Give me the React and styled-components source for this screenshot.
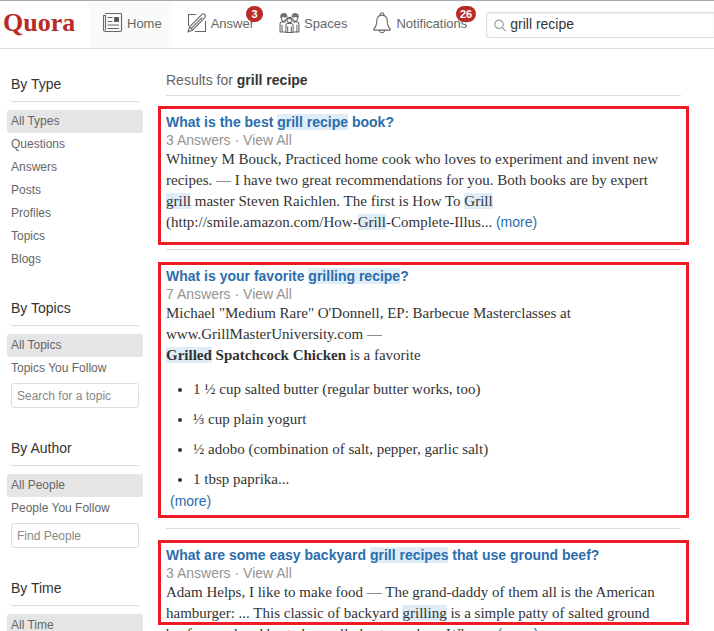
import React from "react";
import styled, { createGlobalStyle, css } from "styled-components";

const sans = '"Liberation Sans", Arial, sans-serif';
const serif = '"Liberation Serif", "Times New Roman", serif';

const GlobalStyle = createGlobalStyle`
  *, *::before, *::after { box-sizing: border-box; }
  body { margin: 0; background: #fff; color: #333; font-family: ${sans}; }
  a { color: inherit; text-decoration: none; }
`;

const Page = styled.div`
  height: 100vh;
  overflow: hidden;
  display: flex;
  flex-direction: column;
`;

const Header = styled.header`
  display: flex;
  flex: none;
  height: 49px;
  border-top: 1px solid #aaa;
  border-bottom: 1px solid #dcdcdc;
`;

const Logo = styled.a`
  flex: none;
  width: 89px;
  padding-left: 3px;
  color: #b92b27;
  font: bold 26px/43px ${serif};
`;

const Nav = styled.nav`
  display: flex;
  gap: 1px;
`;

const NavLink = styled.a`
  position: relative;
  display: flex;
  align-items: center;
  gap: 4px;
  padding: 0 10px 3px 14px;
  color: #666;
  font-size: 13px;
  white-space: nowrap;
  background: ${(p) => (p.$active ? "#f9fafa" : "transparent")};

  svg { flex: none; }
`;

const Badge = styled.span`
  position: absolute;
  top: 5px;
  right: 1px;
  min-width: 17px;
  height: 16px;
  padding: 0 4px;
  border-radius: 8px;
  background: #b92b27;
  color: #fff;
  font: bold 11px/16px ${sans};
  text-align: center;
`;

const SearchBox = styled.label`
  display: flex;
  flex: 1;
  align-items: center;
  gap: 4px;
  min-width: 0;
  height: 26px;
  margin: 11px 0 0 9px;
  padding-left: 7px;
  border: 1px solid #ddd;
  border-right: 0;
  border-radius: 4px 0 0 4px;
  box-shadow: inset 0 1px 2px #eee;
`;

const SearchInput = styled.input`
  flex: 1;
  min-width: 0;
  padding: 0 0 2px;
  border: 0;
  outline: 0;
  background: transparent;
  color: #333;
  font: 14px/20px ${sans};
`;

const Body = styled.div`
  display: flex;
  gap: 23px;
  padding: 0 33px 0 7px;
`;

const Sidebar = styled.aside`
  flex: none;
  width: 136px;
  padding-top: 25px;
`;

const FilterSection = styled.section`
  display: flow-root;
  margin-bottom: 27px;
`;

const FilterHeading = styled.h2`
  margin: 0 4px 8px;
  padding-bottom: 7px;
  border-bottom: 1px solid #ddd;
  font: 14px/20px ${sans};
`;

const FilterLink = styled.a`
  display: block;
  padding: 0 4px;
  border-radius: 2px;
  color: #666;
  font-size: 12px;
  line-height: 23px;
  ${(p) => p.$active && css`background: #e5e5e5;`}
`;

const FilterInput = styled.input`
  display: block;
  width: 128px;
  height: 25px;
  margin: 3px 4px;
  padding: 0 5px;
  border: 1px solid #ddd;
  border-radius: 3px;
  font: 12px/20px ${sans};

  &::placeholder { color: #888; opacity: 1; }
`;

const Results = styled.main`
  flex: 1;
  min-width: 0;
  padding-top: 21px;
`;

const ResultsHeading = styled.h1`
  margin: 0;
  padding-bottom: 5px;
  border-bottom: 1px solid #ddd;
  color: #666;
  font: 14px/20px ${sans};

  strong { color: #333; }
`;

const Result = styled.article`
  position: relative;
  padding: 17px 0 16px;
  border-bottom: 1px solid #ddd;
`;

/* Red outline laid over a result to call attention to it. */
const Callout = styled.div`
  position: absolute;
  top: ${(p) => p.$top}px;
  bottom: ${(p) => p.$bottom}px;
  left: -8px;
  right: -8px;
  border: 3px solid #ed1c24;
  pointer-events: none;
`;

const Title = styled.h3`
  margin: 0;
  color: #2b6dad;
  font: bold 14px/18px ${sans};
`;

const Meta = styled.div`
  color: #949494;
  font-size: 14px;
  line-height: 18px;
`;

const Excerpt = styled.div`
  font: 15px/21px ${serif};
`;

const Line = styled.span`
  display: block;
  white-space: nowrap;
`;

const Ingredients = styled.ul`
  display: grid;
  gap: 9px;
  margin: 13px 0 1px;
  padding-left: 27px;
`;

const Mark = styled.mark`
  background: #deedf8;
  color: inherit;
`;

const MoreLink = styled.a`
  color: #2b6dad;
  font: 14px/16px ${sans};
  ${(p) => p.$indent && css`margin-left: 4px;`}
`;

const stroke = { fill: "none", stroke: "#666", strokeWidth: 1.1, strokeLinejoin: "round", strokeLinecap: "round" };

const HomeIcon = () => (
  <svg width="20" height="20" viewBox="0 0 20 20" {...stroke} aria-hidden="true">
    <path d="M2.5.5h15.2q.8 0 .8.8v16q0 1.2-1.3 1.2H2.5q-2 0-2-1.8V2.5h2V17" />
    <path d="M5 4.5h4M5 8.5h4M5 12h10.5M5 15.5h10.5" />
    <path d="M11.5 4.5h4v4h-4z" fill="#555" />
  </svg>
);

const AnswerIcon = () => (
  <svg width="20" height="20" viewBox="0 0 20 20" {...stroke} aria-hidden="true">
    <path d="M9 1.5H1.5V13M18.5 8v10.5H8" strokeLinecap="butt" />
    <path d="M.9 19.1l1.7-5.2L14.9 1.4q1.4-1.2 2.8 0t.2 3L5.7 17.1zM2.6 13.9l3.1 3.2M4.4 15.3 14.8 4.8" />
  </svg>
);

const SpacesIcon = () => (
  <svg width="21" height="22" viewBox="0 0 22 22" {...stroke} aria-hidden="true">
    <path d="M7.2 21v-7.3q0-2.1 2-2.1h3.6q2 0 2 2.1V21zM9.1 15v6M12.9 15v6" />
    <circle cx="11" cy="7.8" r="2.7" />
    <path d="M8.4 7q1.9.2 3-1.2 1 1.1 2.2 1.2M6.7 10H3.2q-2.1 0-2.1 2v8.4h6M15.3 10h3.5q2.1 0 2.1 2v8.4h-6M3.2 13v7.4M18.8 13v7.4M2.3 4.6q0 4.2 2.8 4.5 2-.1 2.5-2.3M19.7 4.6q0 4.2-2.8 4.5-2-.1-2.5-2.3" />
    <path d="M2 4.8Q1.5 1.4 4.6 1.3q3.3-.7 3.7 3Q5.6 5.5 4.9 3.7 3.7 5.1 2 4.8zM20 4.8q.5-3.4-2.6-3.5-3.3-.7-3.7 3 2.7 1.2 3.4-.6 1.2 1.4 2.9 1.1z" fill="#777" />
  </svg>
);

const BellIcon = () => (
  <svg width="20" height="22" viewBox="-1 0 20 22" {...stroke} aria-hidden="true">
    <path d="M7.2 3.4V2.1Q7.4.8 9 .8t1.8 1.3v1.3M9 3.1c-3.7 0-5.2 2.8-5.2 5.7 0 4.5-.6 5.9-3 8.3q-.3 1 .6 1h15.2q.9 0 .6-1c-2.4-2.4-3-3.8-3-8.3 0-2.9-1.5-5.7-5.2-5.7zM6.5 18.5q.4 2.3 2.5 2.3t2.5-2.3" />
  </svg>
);

const SearchIcon = () => (
  <svg width="12" height="13" viewBox="0 0 12 13" fill="none" stroke="#999" strokeWidth="1.2" aria-hidden="true">
    <circle cx="5" cy="5.3" r="4.2" />
    <path d="m8 8.4 3.6 3.8" />
  </svg>
);

const filters = [
  { title: "By Type", items: ["All Types", "Questions", "Answers", "Posts", "Profiles", "Topics", "Blogs"] },
  { title: "By Topics", items: ["All Topics", "Topics You Follow"], placeholder: "Search for a topic" },
  { title: "By Author", items: ["All People", "People You Follow"], placeholder: "Find People" },
  { title: "By Time", items: ["All Time"] },
];

const AnswerMeta = ({ count }) => (
  <Meta>
    {count} Answers · <a href="#all">View All</a>
  </Meta>
);

export default function App() {
  return (
    <Page>
      <GlobalStyle />
      <Header>
        <Logo href="#top">Quora</Logo>
        <Nav>
          <NavLink href="#home" $active><HomeIcon />Home</NavLink>
          <NavLink href="#answer"><AnswerIcon />Answer<Badge>3</Badge></NavLink>
          <NavLink href="#spaces"><SpacesIcon />Spaces</NavLink>
          <NavLink href="#notifications"><BellIcon />Notifications<Badge>26</Badge></NavLink>
        </Nav>
        <SearchBox>
          <SearchIcon />
          <SearchInput type="text" aria-label="Search" defaultValue="grill recipe" />
        </SearchBox>
      </Header>
      <Body>
        <Sidebar>
          {filters.map(({ title, items, placeholder }) => (
            <FilterSection key={title}>
              <FilterHeading>{title}</FilterHeading>
              {items.map((item, i) => (
                <FilterLink key={item} href="#filter" $active={i === 0}>{item}</FilterLink>
              ))}
              {placeholder && <FilterInput type="text" aria-label={placeholder} placeholder={placeholder} />}
            </FilterSection>
          ))}
        </Sidebar>
        <Results>
          <ResultsHeading>Results for <strong>grill recipe</strong></ResultsHeading>

          <Result>
            <Title><a href="#q1">What is the best <Mark>grill recipe</Mark> book?</a></Title>
            <AnswerMeta count={3} />
            <Excerpt>
              <Line>Whitney M Bouck, Practiced home cook who loves to experiment and invent new</Line>
              <Line>recipes. — I have two great recommendations for you. Both books are by expert</Line>
              <Line><Mark>grill</Mark> master Steven Raichlen. The first is How To <Mark>Grill</Mark></Line>
              <Line>(http://smile.amazon.com/How-<Mark>Grill</Mark>-Complete-Illus... <MoreLink href="#q1">(more)</MoreLink></Line>
            </Excerpt>
            <Callout $top={10} $bottom={4} />
          </Result>

          <Result>
            <Title><a href="#q2">What is your favorite <Mark>grilling recipe</Mark>?</a></Title>
            <AnswerMeta count={7} />
            <Excerpt>
              <Line>Michael "Medium Rare" O'Donnell, EP: Barbecue Masterclasses at</Line>
              <Line>www.GrillMasterUniversity.com —</Line>
              <Line><strong><Mark>Grilled</Mark> Spatchcock Chicken</strong> is a favorite</Line>
              <Ingredients>
                <li>1 ½ cup salted butter (regular butter works, too)</li>
                <li>⅓ cup plain yogurt</li>
                <li>½ adobo (combination of salt, pepper, garlic salt)</li>
                <li>1 tbsp paprika...</li>
              </Ingredients>
              <Line><MoreLink href="#q2" $indent>(more)</MoreLink></Line>
            </Excerpt>
            <Callout $top={12} $bottom={10} />
          </Result>

          <Result>
            <Title><a href="#q3">What are some easy backyard <Mark>grill recipes</Mark> that use ground beef?</a></Title>
            <AnswerMeta count={3} />
            <Excerpt>
              <Line>Adam Helps, I like to make food — The grand-daddy of them all is the American</Line>
              <Line>hamburger: ... This classic of backyard <Mark>grilling</Mark> is a simple patty of salted ground</Line>
              <Line>beef, seared and basted, usually best on a bun. When... <MoreLink href="#q3">(more)</MoreLink></Line>
            </Excerpt>
            <Callout $top={11} $bottom={36} />
          </Result>
        </Results>
      </Body>
    </Page>
  );
}
